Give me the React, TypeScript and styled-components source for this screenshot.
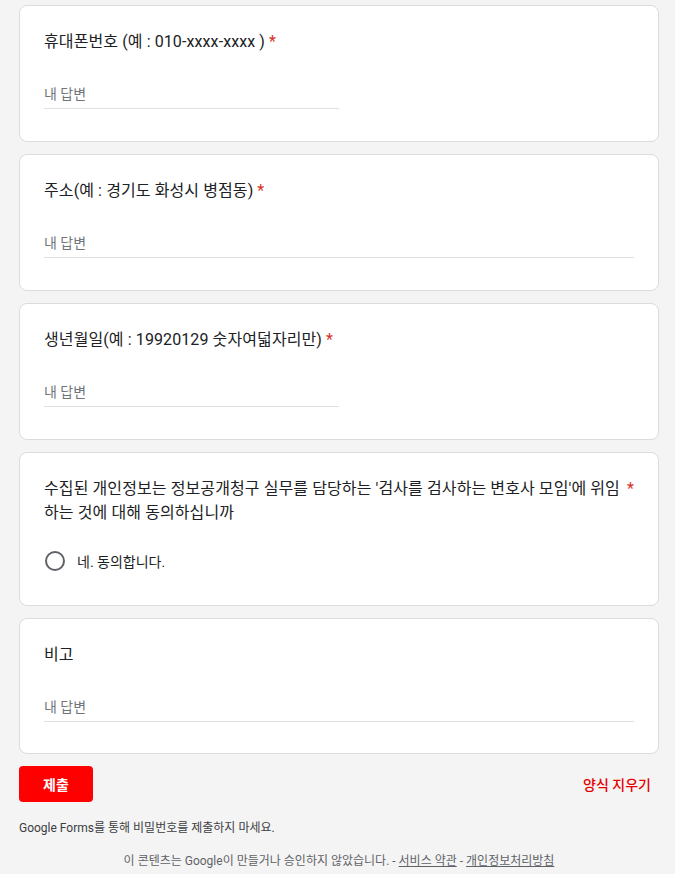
import React from "react";
import styled, { createGlobalStyle } from "styled-components";

const GlobalStyle = createGlobalStyle`
  html, body {
    margin: 0;
    padding: 0;
    background: #f4f4f4;
  }
  body {
    font-family: Roboto, "Noto Sans CJK KR", "Noto Sans", sans-serif;
    color: #202124;
  }
`;

const Page = styled.div`
  width: 640px;
  margin: 0 0 0 19px;
  padding-top: 5px;
  display: flex;
  flex-direction: column;
  gap: 12px;
`;

const Card = styled.div<{ $bottom?: number }>`
  background: #fff;
  border: 1px solid #dadce0;
  border-radius: 8px;
  padding: 24px 24px ${(p) => p.$bottom ?? 32}px;
  display: flex;
  flex-direction: column;
`;

const TitleRow = styled.div`
  display: flex;
  align-items: flex-start;
  font-size: 16px;
  line-height: 24px;
  letter-spacing: 0.1px;
`;

const TitleText = styled.div`
  word-break: normal;
  line-break: anywhere;
`;

const Required = styled.span`
  color: #d93025;
  padding-left: 4px;
  flex-shrink: 0;
`;

const AnswerInput = styled.input<{ $wide?: boolean }>`
  width: ${(p) => (p.$wide ? "100%" : "50%")};
  box-sizing: border-box;
  margin-top: 16px;
  padding: 12px 0 2px;
  border: none;
  border-bottom: 1px solid #e0e0e0;
  outline: none;
  background: transparent;
  font-family: inherit;
  font-size: 14px;
  line-height: 24px;
  color: #202124;

  &::placeholder {
    color: #70757a;
  }
`;

const RadioRow = styled.label`
  margin-top: 16px;
  height: 40px;
  display: flex;
  align-items: center;
  gap: 12px;
  font-size: 14px;
  cursor: pointer;
`;

const RadioCircle = styled.span`
  width: 20px;
  height: 20px;
  box-sizing: border-box;
  border: 2px solid #5f6368;
  border-radius: 50%;
  margin-left: 1px;
`;

const Actions = styled.div`
  display: flex;
  justify-content: space-between;
  align-items: center;
`;

const SubmitButton = styled.button`
  height: 36px;
  padding: 0 24px;
  border: none;
  border-radius: 4px;
  background: #ff0000;
  color: #fff;
  font-family: inherit;
  font-size: 14px;
  font-weight: 700;
  cursor: pointer;
`;

const ClearButton = styled.button`
  padding: 8px;
  border: none;
  background: transparent;
  color: #e60000;
  font-family: inherit;
  font-size: 14px;
  font-weight: 500;
  cursor: pointer;
`;

const Notice = styled.div`
  margin-top: 6px;
  font-size: 12px;
  line-height: 16px;
  color: #3c4043;
`;

const Footer = styled.div`
  margin-top: 5px;
  text-align: center;
  font-size: 12px;
  line-height: 16px;
  color: #5f6368;

  a {
    color: #5f6368;
    text-decoration: underline;
  }
`;

type Question = {
  title: string;
  required?: boolean;
  wide?: boolean;
};

const questions: Question[] = [
  { title: "휴대폰번호 (예 : 010-xxxx-xxxx )", required: true },
  { title: "주소(예 : 경기도 화성시 병점동)", required: true, wide: true },
  { title: "생년월일(예 : 19920129 숫자여덟자리만)", required: true },
];

const Title: React.FC<{ text: string; required?: boolean }> = ({ text, required }) => (
  <TitleRow>
    <TitleText>{text}</TitleText>
    {required && <Required>*</Required>}
  </TitleRow>
);

export default function App() {
  return (
    <>
      <GlobalStyle />
      <Page>
        {questions.map((q) => (
          <Card key={q.title}>
            <Title text={q.title} required={q.required} />
            <AnswerInput placeholder="내 답변" $wide={q.wide} />
          </Card>
        ))}
        <Card $bottom={24}>
          <Title
            text="수집된 개인정보는 정보공개청구 실무를 담당하는 '검사를 검사하는 변호사 모임'에 위임하는 것에 대해 동의하십니까"
            required
          />
          <RadioRow>
            <RadioCircle />
            네. 동의합니다.
          </RadioRow>
        </Card>
        <Card $bottom={31}>
          <Title text="비고" />
          <AnswerInput placeholder="내 답변" $wide />
        </Card>
        <Actions>
          <SubmitButton type="button">제출</SubmitButton>
          <ClearButton type="button">양식 지우기</ClearButton>
        </Actions>
        <Notice>Google Forms를 통해 비밀번호를 제출하지 마세요.</Notice>
        <Footer>
          이 콘텐츠는 Google이 만들거나 승인하지 않았습니다. - <a href="#">서비스 약관</a> -{" "}
          <a href="#">개인정보처리방침</a>
        </Footer>
      </Page>
    </>
  );
}
